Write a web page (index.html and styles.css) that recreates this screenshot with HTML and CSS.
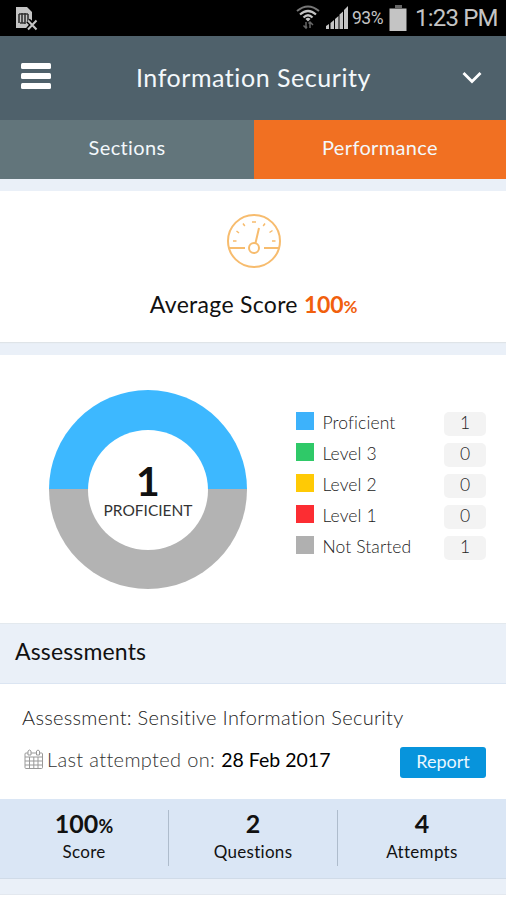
FILE: index.html
```html
<!DOCTYPE html>
<html lang="en">
<head>
    <meta charset="utf-8">
    <title>Information Security</title>
    <link rel="stylesheet" href="styles.css">
</head>

<body>
<div class="status-bar">
    <svg class="sim-icon" width="24" height="26" viewBox="0 0 24 26">
        <path d="M1 1h11l5 5v8l-5 8H1z" fill="#c4c4c4"/>
        <path d="M4 8v9M7 7v10M10 7v11M13 8v7M4 8h9M5 17h5" stroke="#333" stroke-width="1.6" fill="none"/>
        <path d="M13 14.5l9 9M22 14.5l-9 9" stroke="#000" stroke-width="5"/>
        <path d="M13 14.5l8.5 9M21.500 14.500l-8.500 9" stroke="#c4c4c4" stroke-width="2"/>
    </svg>
    <div class="status-right">
        <svg class="wifi-icon" width="24" height="26" viewBox="0 0 24 26">
            <path d="M1 6Q12-3 23 6" stroke="#777" stroke-width="2" fill="none"/>
            <path d="M4 9.500Q12 2.500 20 9.500" stroke="#c4c4c4" stroke-width="2.200" fill="none"/>
            <path d="M7.500 12.500Q12 8 16.500 12.500" stroke="#c4c4c4" stroke-width="2.200" fill="none"/>
            <path d="M9.500 14Q12 11.500 14.500 14L12 16.500z" fill="#c4c4c4"/>
            <path d="M10 17v6M7.500 20.500L10 23l1-1.500M14 23v-6M12.500 18.500L14 17l3 3" stroke="#666" stroke-width="1.500" fill="none"/>
        </svg>
        <svg class="signal-icon" width="24" height="24" viewBox="0 0 24 24">
            <path d="M1 20l3-2v5H1zM5.500 17l3.500-3v9H5.500zM10 13l3.500-3v13H10zM14.500 8.500L18 5.500V23h-3.500zM19 4l4-4v23h-4z" fill="#c4c4c4"/>
        </svg>
        <span class="battery-level">93%</span>
        <svg class="battery-icon" width="18" height="26" viewBox="0 0 18 26">
            <path d="M6 0h7v3H6z" fill="#666"/>
            <path d="M0.500 3.500h17V26H0.500z" fill="#c4c4c4"/>
        </svg>
        <span class="clock">1:23 PM</span>
    </div>
</div>

<div class="header">
    <div class="menu">
        <span></span>
        <span></span>
        <span></span>
    </div>
    <div class="title">Information Security</div>
    <svg class="chevron" width="20" height="14" viewBox="0 0 20 14">
        <path d="M1.500 2L10 10.500L18.500 2" stroke="#fff" stroke-width="2.800" fill="none"/>
    </svg>
</div>

<div class="tabs">
    <div class="tab">Sections</div>
    <div class="tab active">Performance</div>
</div>

<div class="card average">
    <svg class="gauge" width="56" height="56" viewBox="0 0 56 56">
        <g stroke="#f7bc6e" fill="none" stroke-width="2">
            <circle cx="28" cy="28" r="26"/>
            <circle cx="28" cy="35" r="5"/>
            <path d="M29.500 30L33 15M3 35h16M38 35h15"/>
            <path d="M7 28h3.500M10.500 18l2.500 2M17 10.500l1.800 2.500M26 9h4M39 10.500l-1.800 2.500M46.500 17.500l-3 2M46 28h3.500" stroke-width="1.500"/>
        </g>
    </svg>
    <div class="average-text">Average Score <b>100<small>%</small></b></div>
</div>

<div class="card summary">
    <div class="donut">
        <div class="donut-hole">
            <div class="donut-count">1</div>
            <div class="donut-label">PROFICIENT</div>
        </div>
    </div>
    <div class="legend">
        <div class="legend-row"><i class="swatch blue"></i><span class="legend-name">Proficient</span><span class="pill">1</span></div>
        <div class="legend-row"><i class="swatch green"></i><span class="legend-name">Level 3</span><span class="pill">0</span></div>
        <div class="legend-row"><i class="swatch yellow"></i><span class="legend-name">Level 2</span><span class="pill">0</span></div>
        <div class="legend-row"><i class="swatch red"></i><span class="legend-name">Level 1</span><span class="pill">0</span></div>
        <div class="legend-row"><i class="swatch gray"></i><span class="legend-name">Not Started</span><span class="pill">1</span></div>
    </div>
</div>

<div class="section-title">Assessments</div>

<div class="assessment">
    <div class="assessment-name">Assessment: Sensitive Information Security</div>
    <div class="assessment-row">
        <svg class="calendar" width="20" height="21" viewBox="0 0 20 21">
            <g stroke="#999" fill="none" stroke-width="1">
                <rect x="1" y="4" width="17.500" height="15.500" rx="1"/>
                <path d="M1 8h17.500M1 12h17.500M1 16h17.500M5.500 8v11.500M9.800 8v11.500M14 8v11.500"/>
                <path d="M4 6V2q1.500-2 3 0v4zM12.500 6V2q1.500-2 3 0v4z" fill="#fff"/>
            </g>
        </svg>
        <span class="last">Last attempted on:</span>
        <span class="date">28 Feb 2017</span>
        <a class="report">Report</a>
    </div>
</div>

<div class="stats">
    <div class="stat"><b>100<small>%</small></b><span>Score</span></div>
    <div class="stat"><b>2</b><span>Questions</span></div>
    <div class="stat"><b>4</b><span>Attempts</span></div>
</div>
<div class="next-card"></div>
</body>
</html>
```
FILE: styles.css
```css
* {
box-sizing: border-box;
}

body {
margin: 0;
height: 900px;
overflow: hidden;
background-color: #eaf0f8;
font-family: Lato, "Open Sans", sans-serif;
font-variant-ligatures: none;
color: #111;
display: flex;
flex-direction: column;
}

body > div {
flex-shrink: 0;
white-space: nowrap;
}

.status-bar {
height: 36px;
background-color: #000;
color: #c4c4c4;
font-family: Roboto, sans-serif;
display: flex;
justify-content: space-between;
padding: 0 9px 0 15px;
}

.sim-icon {
margin-top: 6px;
}

.status-right {
display: flex;
align-items: center;
}

.wifi-icon {
margin-right: 5px;
}

.signal-icon {
margin-right: 3px;
}

.battery-level {
font-size: 17.5px;
width: 31px;
letter-spacing: -0.5px;
margin-right: 6px;
}

.battery-icon {
margin-right: 8px;
margin-top: -1px;
}

.clock {
font-size: 24px;
width: 82px;
letter-spacing: -0.8px;
}

.header {
height: 84px;
background-color: #4f616b;
color: #f3f8fb;
display: flex;
align-items: center;
justify-content: space-between;
padding: 0 24px 0 21px;
}

.menu {
width: 30px;
display: flex;
flex-direction: column;
gap: 4px;
margin-top: -4px;
}

.menu span {
height: 6px;
border-radius: 1.5px;
background-color: #fff;
}

.title {
font-size: 25px;
letter-spacing: 0.55px;
margin-right: 6px;
padding-bottom: 2px;
}

.chevron {
margin-top: -1px;
}

.tabs {
height: 59px;
display: flex;
color: #f3f8fb;
font-size: 20px;
letter-spacing: 0.35px;
}

.tab {
width: 254px;
background-color: #62757b;
display: flex;
align-items: center;
justify-content: center;
padding-bottom: 5px;
}

.active {
width: 252px;
background-color: #f17022;
}

.card {
background-color: #fff;
}

.average {
height: 151px;
margin-top: 12px;
display: flex;
flex-direction: column;
align-items: center;
padding: 22px 0 0 1px;
box-shadow: 0 1px 1px #dfe4e8;
}

.average-text {
font-size: 23px;
letter-spacing: 0.3px;
margin-top: 21px;
line-height: 28px;
}

.average-text b {
color: #f1600d;
letter-spacing: -0.2px;
}

.average-text small {
font-size: 17px;
}

.summary {
height: 268px;
margin-top: 13px;
display: flex;
padding: 35px 20px 0 49px;
}

.donut {
width: 198px;
height: 199px;
border-radius: 50%;
background: linear-gradient(#3db8ff 50%, #b3b3b3 50%);
display: flex;
align-items: center;
justify-content: center;
}

.donut-hole {
width: 120px;
height: 120px;
border-radius: 50%;
background-color: #fff;
text-align: center;
padding-top: 30px;
}

.donut-count {
font-size: 41px;
line-height: 41px;
font-weight: bold;
}

.donut-label {
font-size: 15.5px;
line-height: 18px;
color: #333;
}

.legend {
margin: 20px 0 0 48px;
width: 191px;
display: flex;
flex-direction: column;
gap: 6px;
}

.legend-row {
height: 25px;
display: flex;
align-items: center;
font-size: 17.5px;
font-weight: 300;
color: #222;
}

.swatch {
width: 18px;
height: 18px;
margin: -4px 9px 0 0.5px;
}

.legend-name {
letter-spacing: 0.1px;
}

.blue {
background-color: #3db2fb;
}

.green {
background-color: #2fc968;
}

.yellow {
background-color: #ffca05;
}

.red {
background-color: #fc2d32;
}

.gray {
background-color: #b0b0b0;
}

.pill {
width: 42px;
height: 24px;
margin: 2px 0 0 auto;
line-height: 22px;
border-radius: 5px;
background-color: #f3f3f3;
text-align: center;
}

.section-title {
height: 61px;
border-top: 1px solid #e3e9ee;
border-bottom: 1px solid #dbe5f2;
padding-left: 15px;
font-size: 23px;
letter-spacing: 0.15px;
line-height: 55px;
}

.assessment {
height: 115px;
background-color: #fff;
padding: 19px 20px 0 22px;
font-size: 20px;
font-weight: 300;
color: #222;
}

.assessment-name {
line-height: 28px;
letter-spacing: 0.3px;
}

.assessment-row {
margin-top: 16px;
display: flex;
align-items: center;
height: 31px;
}

.calendar {
margin: -6px 3px 0 2px;
}

.last {
margin-top: -7px;
letter-spacing: 0.35px;
color: #333;
}

.date {
margin: -7px 0 0 6px;
font-weight: 400;
font-size: 19.5px;
color: #000;
}

.report {
width: 86px;
height: 31px;
margin-left: auto;
border-radius: 3px;
background-color: #0794dc;
color: #eaf7ff;
font-size: 18px;
font-weight: 400;
line-height: 29px;
text-align: center;
}

.stats {
height: 80px;
background-color: #dae6f5;
border-bottom: 1px solid #d0dbe8;
display: flex;
padding: 11px 0 12px;
}

.stat {
flex: 1;
display: flex;
flex-direction: column;
align-items: center;
font-size: 17px;
letter-spacing: 0.3px;
}

.stat + .stat {
border-left: 1px solid #aebccc;
}

.stat b {
font-size: 25px;
height: 28px;
line-height: 27px;
letter-spacing: 0;
}

.stat small {
font-size: 18px;
}

.stat span {
line-height: 28px;
}

.next-card {
margin-top: 15px;
height: 6px;
background-color: #fff;
border-top: 1px solid #e3e8ef;
}
```
